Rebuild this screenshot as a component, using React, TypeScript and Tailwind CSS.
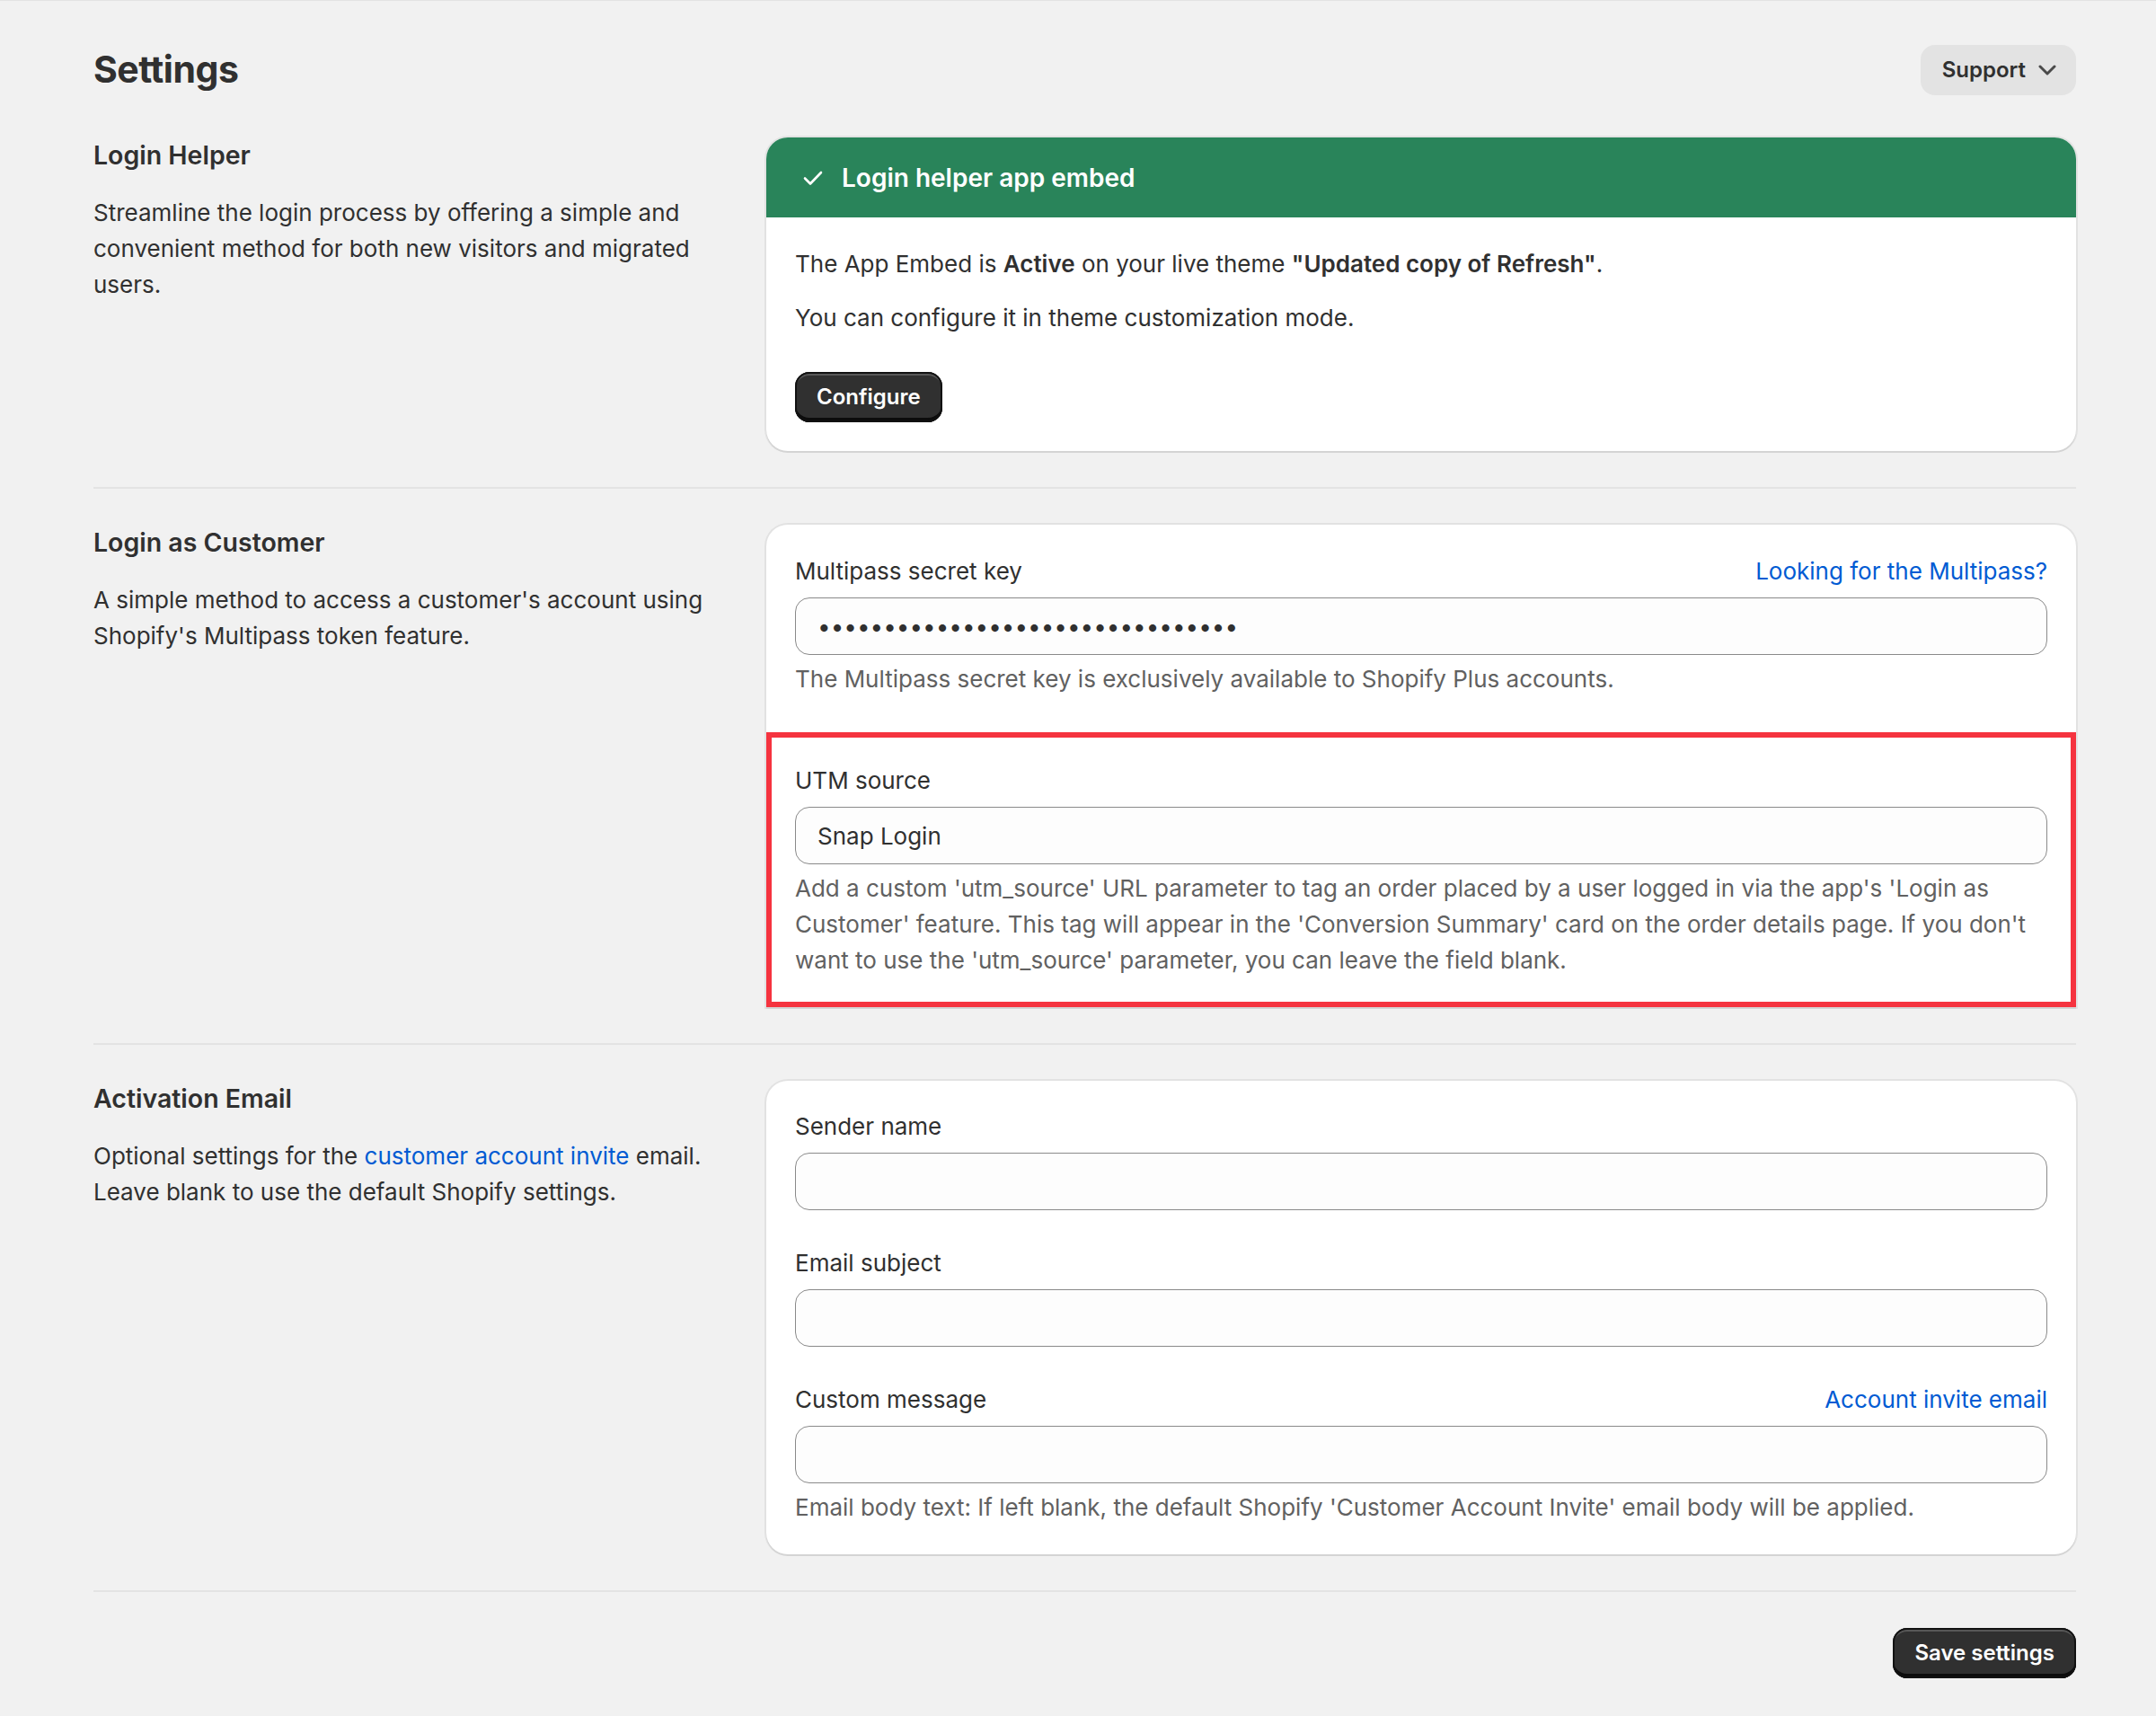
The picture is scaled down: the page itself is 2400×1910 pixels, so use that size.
import React from "react";

interface SectionProps {
  title: string;
  description: React.ReactNode;
  children: React.ReactNode;
}

function Section({ title, description, children }: SectionProps) {
  return (
    <div className="flex gap-[40px]">
      <div className="w-[709px] shrink-0">
        <h2 className="text-[28.5px] leading-[40px] font-semibold text-[#303030]">
          {title}
        </h2>
        <p className="mt-[24px] text-[26px] leading-[40px] text-[#303030]">
          {description}
        </p>
      </div>
      <div className="min-w-0 flex-1">{children}</div>
    </div>
  );
}

function Divider() {
  return <div className="my-[40px] h-[2px] bg-[#e3e3e3]" />;
}

function Card({ children }: { children: React.ReactNode }) {
  return (
    <div className="overflow-hidden rounded-[24px] bg-white shadow-[0_2px_0_0_rgba(26,26,26,0.07),0_0_0_2px_rgba(0,0,0,0.06)]">
      {children}
    </div>
  );
}

function DarkButton({ children }: { children: React.ReactNode }) {
  return (
    <button className="h-[56px] rounded-[16px] bg-[#303030] px-[24px] text-[24px] font-semibold text-white shadow-[inset_0_0_0_2px_#121212,inset_0_4px_0_0_#575757,inset_0_-5px_0_0_#0c0c0c]">
      {children}
    </button>
  );
}

function Field({
  label,
  link,
  value,
  type = "text",
  help,
}: {
  label: string;
  link?: string;
  value?: string;
  type?: string;
  help?: React.ReactNode;
}) {
  return (
    <div>
      <div className="flex items-center justify-between text-[26px] leading-[40px]">
        <label className="text-[#303030]">{label}</label>
        {link && <a className="text-[#005bd3]">{link}</a>}
      </div>
      <input
        type={type}
        readOnly
        defaultValue={value}
        className="mt-[9px] block h-[64px] w-full rounded-[16px] border-[1.5px] border-[#8a8a8a] bg-[#fdfdfd] px-[24px] text-[26px] text-[#303030] outline-none"
      />
      {help && (
        <p className="mt-[7px] text-[26px] leading-[40px] text-[#616161]">
          {help}
        </p>
      )}
    </div>
  );
}

export default function App() {
  return (
    <div
      className="min-h-[1910px] border-t border-[#e3e3e3] bg-[#f1f1f1] pl-[104px] pr-[89px] pt-[49px] pb-[41px] text-[#303030]"
      style={{ fontFamily: "Inter, 'Noto Sans', sans-serif" }}
    >
      <div className="flex h-[56px] items-center justify-between">
        <h1 className="text-[41px] font-bold tracking-[-0.5px]">Settings</h1>
        <button className="flex h-[56px] items-center gap-[14px] rounded-[16px] bg-[#e3e3e3] pl-[24px] pr-[22px] text-[24px] font-semibold text-[#303030]">
          Support
          <svg width="20" height="12" viewBox="0 0 20 12" fill="none">
            <path
              d="M2 2l8 8 8-8"
              stroke="#4a4a4a"
              strokeWidth="3"
              strokeLinecap="round"
              strokeLinejoin="round"
            />
          </svg>
        </button>
      </div>

      <div className="mt-[47px]">
        <Section
          title="Login Helper"
          description="Streamline the login process by offering a simple and convenient method for both new visitors and migrated users."
        >
          <Card>
            <div className="flex h-[89px] items-center gap-[12px] bg-[#29845a] px-[32px] text-white">
              <div className="flex h-[40px] w-[40px] items-center justify-center">
                <svg width="24" height="18" viewBox="0 0 24 18" fill="none">
                  <path
                    d="M3 9.5l6 6L21 3"
                    stroke="white"
                    strokeWidth="2.6"
                    strokeLinecap="round"
                    strokeLinejoin="round"
                  />
                </svg>
              </div>
              <span className="text-[28px] font-semibold">
                Login helper app embed
              </span>
            </div>
            <div className="px-[32px] pt-[32px] pb-[32px] text-[26px] leading-[40px]">
              <p>
                The App Embed is <b className="font-semibold">Active</b> on your
                live theme{" "}
                <b className="font-semibold">"Updated copy of Refresh"</b>.
              </p>
              <p className="mt-[20px]">
                You can configure it in theme customization mode.
              </p>
              <div className="mt-[40px]">
                <DarkButton>Configure</DarkButton>
              </div>
            </div>
          </Card>
        </Section>

        <Divider />

        <Section
          title="Login as Customer"
          description="A simple method to access a customer's account using Shopify's Multipass token feature."
        >
          <div className="rounded-t-[24px] bg-white shadow-[0_2px_0_0_rgba(26,26,26,0.07),0_0_0_2px_rgba(0,0,0,0.06)]">
            <div className="px-[32px] pt-[32px] pb-[39px]">
              <Field
                label="Multipass secret key"
                link="Looking for the Multipass?"
                type="password"
                value="abcdefghijklmnopqrstuvwxyz012345"
                help="The Multipass secret key is exclusively available to Shopify Plus accounts."
              />
            </div>
            <div className="border-[6px] border-[#f5333f] px-[26px] pt-[28px] pb-[26px]">
              <Field
                label="UTM source"
                value="Snap Login"
                help="Add a custom 'utm_source' URL parameter to tag an order placed by a user logged in via the app's 'Login as Customer' feature. This tag will appear in the 'Conversion Summary' card on the order details page. If you don't want to use the 'utm_source' parameter, you can leave the field blank."
              />
            </div>
          </div>
        </Section>

        <Divider />

        <Section
          title="Activation Email"
          description={
            <>
              Optional settings for the{" "}
              <a className="text-[#005bd3]">customer account invite</a> email.
              Leave blank to use the default Shopify settings.
            </>
          }
        >
          <Card>
            <div className="flex flex-col gap-[39px] px-[32px] pt-[31px] pb-[32px]">
              <Field label="Sender name" />
              <Field label="Email subject" />
              <Field
                label="Custom message"
                link="Account invite email"
                help="Email body text: If left blank, the default Shopify 'Customer Account Invite' email body will be applied."
              />
            </div>
          </Card>
        </Section>

        <Divider />

        <div className="flex justify-end">
          <DarkButton>Save settings</DarkButton>
        </div>
      </div>
    </div>
  );
}
